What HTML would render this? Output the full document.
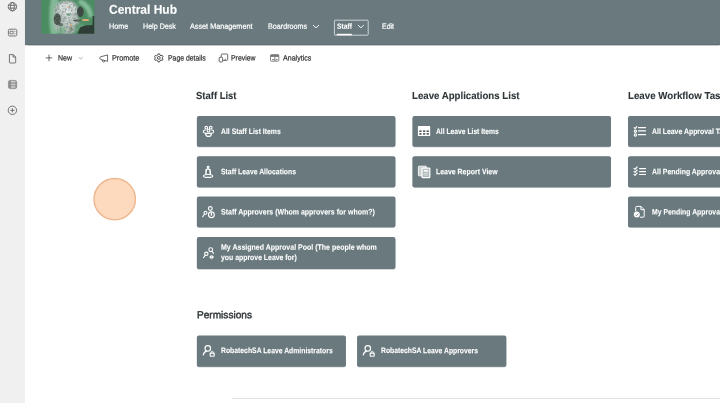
<!DOCTYPE html>
<html lang="en">
<head>
<meta charset="utf-8">
<title>Central Hub - Staff</title>
<style>
*{box-sizing:border-box;margin:0;padding:0}
html,body{width:720px;height:403px;overflow:hidden;background:#fff}
body{position:relative;font-family:"Liberation Sans",sans-serif;color:#323130}
.t{position:absolute;white-space:nowrap;line-height:1;transform-origin:0 0}
.a{position:absolute}
#side{position:absolute;left:0;top:0;width:25px;height:403px;background:#f0f0f0}
#hdr{position:absolute;left:25px;top:0;width:695px;height:45px;background:#69797e;border-bottom:1px solid #5f6e73;box-shadow:0 0.5px 1px rgba(0,0,0,.22)}
.btn{position:absolute;background:#69797e;border-radius:2px;box-shadow:0 0.3px 0.9px rgba(0,0,0,.3)}
svg{position:absolute;left:0;top:0;overflow:visible}
</style>
</head>
<body>
<div id="side"></div>
<div id="hdr"></div>
<svg width="720" height="403" viewBox="0 0 720 403" style="pointer-events:none">
<defs>
<filter id="bl1" x="-30%" y="-30%" width="160%" height="160%"><feGaussianBlur stdDeviation="1.3"/></filter>
<filter id="bl2" x="-30%" y="-30%" width="160%" height="160%"><feGaussianBlur stdDeviation="0.7"/></filter>
<filter id="nz" x="0" y="0" width="100%" height="100%">
<feTurbulence type="fractalNoise" baseFrequency="0.45" numOctaves="2" seed="7" result="n"/>
<feColorMatrix in="n" type="matrix" values="0 0 0 0 0.15  0 0 0 0 0.2  0 0 0 0 0.17  0 0 0 -3.2 1.9"/>
</filter>
<clipPath id="lc"><rect x="41.3" y="0" width="53.2" height="33.8"/></clipPath>
<clipPath id="lc2"><rect x="54" y="0" width="25" height="34" rx="11"/></clipPath>
</defs>
<g clip-path="url(#lc)">
<rect x="41" y="-1" width="54" height="35" fill="#4c8c63"/>
<g filter="url(#bl1)">
<path d="M51 -2 Q47.500 17 51 36 L58 36 L58 -2Z" fill="#82b895"/>
<path d="M80 -1 Q92 4 93 16 L89 18 Q87 7 78 3Z" fill="#86bd9b"/>
<rect x="54.300" y="0.500" width="24.200" height="34" rx="11" fill="#b4bfbc"/>
<ellipse cx="67" cy="9" rx="8.5" ry="7" fill="#dde3e2"/>
<ellipse cx="70" cy="21" rx="6" ry="5" fill="#c9d1cf"/>
<ellipse cx="62" cy="30" rx="4" ry="3.5" fill="#86bb98"/>
<ellipse cx="80" cy="27" rx="6" ry="3.5" fill="#5e9c76"/>
</g>
<g filter="url(#bl2)">
<ellipse cx="57.300" cy="19.300" rx="3.500" ry="6" fill="#454f49"/>
<ellipse cx="60.5" cy="24.5" rx="2.5" ry="1.6" fill="#5a645d"/>
<ellipse cx="80.300" cy="11.700" rx="3.400" ry="5.200" fill="#3d4943"/>
<ellipse cx="77" cy="20.5" rx="4" ry="1.1" fill="#4a554e"/>
<path d="M77.500 34 L80 27.500 L85 25.500 L92.400 25 L92.800 16 L94.500 16 L94.500 34 Z" fill="#2f3d36"/>
<ellipse cx="68.800" cy="14.800" rx="1.800" ry="0.900" fill="#5f9f78"/>
<ellipse cx="71" cy="29" rx="1.600" ry="2.400" fill="#8a8f78"/>
<ellipse cx="85.500" cy="20" rx="3.600" ry="1.100" fill="#e5a877"/>
<ellipse cx="71" cy="24.800" rx="1.100" ry="0.900" fill="#eaa872"/>
<ellipse cx="67.700" cy="7" rx="0.800" ry="0.900" fill="#efb386"/>
</g>
<rect x="52" y="0" width="30" height="34" filter="url(#nz)" clip-path="url(#lc2)" opacity="0.55"/>
</g>
</svg>

<svg width="720" height="403" viewBox="0 0 720 403" style="pointer-events:none"><rect x="334.4" y="20.2" width="33.8" height="15" rx="0.8" fill="none" stroke="#eef1f1" stroke-width="0.75"/><rect x="336.8" y="33.8" width="15" height="1.5" fill="#fff"/></svg>

<svg width="720" height="403" viewBox="0 0 720 403" style="pointer-events:none">
<rect x="196.9" y="116.5" width="198.5" height="30.8" rx="2" fill="#3f4b50" opacity="0.45"/>
<rect x="196.9" y="156.8" width="198.5" height="30.9" rx="2" fill="#3f4b50" opacity="0.45"/>
<rect x="196.9" y="197.1" width="198.5" height="30.7" rx="2" fill="#3f4b50" opacity="0.45"/>
<rect x="196.9" y="237.4" width="198.5" height="32.1" rx="2" fill="#3f4b50" opacity="0.45"/>
<rect x="412.5" y="116.5" width="198.5" height="30.8" rx="2" fill="#3f4b50" opacity="0.45"/>
<rect x="412.5" y="156.8" width="198.5" height="30.9" rx="2" fill="#3f4b50" opacity="0.45"/>
<rect x="628.0" y="116.5" width="198.5" height="30.8" rx="2" fill="#3f4b50" opacity="0.45"/>
<rect x="628.0" y="156.8" width="198.5" height="30.9" rx="2" fill="#3f4b50" opacity="0.45"/>
<rect x="628.0" y="197.1" width="198.5" height="30.7" rx="2" fill="#3f4b50" opacity="0.45"/>
<rect x="196.9" y="335.9" width="149.0" height="31.4" rx="2" fill="#3f4b50" opacity="0.45"/>
<rect x="357.1" y="335.9" width="149.2" height="31.4" rx="2" fill="#3f4b50" opacity="0.45"/>
<rect x="196.9" y="116.0" width="198.5" height="30.8" rx="2" fill="#69797e"/>
<rect x="196.9" y="156.3" width="198.5" height="30.9" rx="2" fill="#69797e"/>
<rect x="196.9" y="196.6" width="198.5" height="30.7" rx="2" fill="#69797e"/>
<rect x="196.9" y="236.9" width="198.5" height="32.1" rx="2" fill="#69797e"/>
<rect x="412.5" y="116.0" width="198.5" height="30.8" rx="2" fill="#69797e"/>
<rect x="412.5" y="156.3" width="198.5" height="30.9" rx="2" fill="#69797e"/>
<rect x="628.0" y="116.0" width="198.5" height="30.8" rx="2" fill="#69797e"/>
<rect x="628.0" y="156.3" width="198.5" height="30.9" rx="2" fill="#69797e"/>
<rect x="628.0" y="196.6" width="198.5" height="30.7" rx="2" fill="#69797e"/>
<rect x="196.9" y="335.4" width="149.0" height="31.4" rx="2" fill="#69797e"/>
<rect x="357.1" y="335.4" width="149.2" height="31.4" rx="2" fill="#69797e"/>
</svg>
<div id="txt" style="position:absolute;left:0;top:0;width:720px;height:403px;will-change:transform">
<div class="t" id="t_title" style="left:109.00px;top:3.00px;font-size:12.7px;font-weight:700;transform:translateY(0.80px) scaleX(0.9457) rotate(0.03deg);color:#fff;-webkit-text-stroke:0.1px #fff">Central Hub</div>
<div class="t" id="n_home" style="left:108.90px;top:22.00px;font-size:7.6px;font-weight:400;transform:translateY(0.70px) scaleX(0.9524) rotate(0.03deg);color:#fff;-webkit-text-stroke:0.22px #fff">Home</div>
<div class="t" id="n_help" style="left:142.90px;top:22.00px;font-size:7.6px;font-weight:400;transform:translateY(0.70px) scaleX(0.9392) rotate(0.03deg);color:#fff;-webkit-text-stroke:0.22px #fff">Help Desk</div>
<div class="t" id="n_asset" style="left:190.40px;top:22.00px;font-size:7.6px;font-weight:400;transform:translateY(0.70px) scaleX(0.9551) rotate(0.03deg);color:#fff;-webkit-text-stroke:0.22px #fff">Asset Management</div>
<div class="t" id="n_board" style="left:267.80px;top:22.00px;font-size:7.6px;font-weight:400;transform:translateY(0.70px) scaleX(0.9450) rotate(0.03deg);color:#fff;-webkit-text-stroke:0.22px #fff">Boardrooms</div>
<div class="t" id="n_staff" style="left:336.70px;top:22.00px;font-size:7.6px;font-weight:700;transform:translateY(0.70px) scaleX(0.8948) rotate(0.03deg);color:#fff;-webkit-text-stroke:0.1px #fff">Staff</div>
<div class="t" id="n_edit" style="left:381.60px;top:22.00px;font-size:7.6px;font-weight:400;transform:translateY(0.70px) scaleX(0.9165) rotate(0.03deg);color:#fff;-webkit-text-stroke:0.22px #fff">Edit</div>
<div class="t" id="c_new" style="left:57.90px;top:54.00px;font-size:7.7px;font-weight:400;transform:translateY(0.60px) scaleX(0.9096) rotate(0.03deg);color:#333;-webkit-text-stroke:0.22px #333">New</div>
<div class="t" id="c_promote" style="left:112.10px;top:54.00px;font-size:7.7px;font-weight:400;transform:translateY(0.60px) scaleX(0.9394) rotate(0.03deg);color:#333;-webkit-text-stroke:0.22px #333">Promote</div>
<div class="t" id="c_details" style="left:167.80px;top:54.00px;font-size:7.7px;font-weight:400;transform:translateY(0.60px) scaleX(0.8934) rotate(0.03deg);color:#333;-webkit-text-stroke:0.22px #333">Page details</div>
<div class="t" id="c_preview" style="left:231.10px;top:54.00px;font-size:7.7px;font-weight:400;transform:translateY(0.60px) scaleX(0.8960) rotate(0.03deg);color:#333;-webkit-text-stroke:0.22px #333">Preview</div>
<div class="t" id="c_analytics" style="left:283.30px;top:54.00px;font-size:7.7px;font-weight:400;transform:translateY(0.60px) scaleX(0.9199) rotate(0.03deg);color:#333;-webkit-text-stroke:0.22px #333">Analytics</div>
<div class="t" id="h_staff" style="left:196.20px;top:90.00px;font-size:10.2px;font-weight:700;transform:translateY(0.90px) scaleX(0.9290) rotate(0.03deg);color:#2f3538;-webkit-text-stroke:0.1px #2f3538">Staff List</div>
<div class="t" id="h_leave" style="left:411.80px;top:90.00px;font-size:10.2px;font-weight:700;transform:translateY(0.90px) scaleX(0.9478) rotate(0.03deg);color:#2f3538;-webkit-text-stroke:0.1px #2f3538">Leave Applications List</div>
<div class="t" id="h_work" style="left:627.50px;top:90.00px;font-size:10.2px;font-weight:700;transform:translateY(0.90px) scaleX(0.9536) rotate(0.03deg);color:#2f3538;-webkit-text-stroke:0.1px #2f3538">Leave Workflow Tasks</div>
<div class="t" id="h_perm" style="left:196.70px;top:310.00px;font-size:10.2px;font-weight:400;transform:translateY(0.20px) scaleX(0.9913) rotate(0.03deg);color:#2f3538;-webkit-text-stroke:0.42px #2f3538">Permissions</div>
<div class="t" id="b1" style="left:220.50px;top:128.00px;font-size:8.0px;font-weight:700;transform:translateY(0.00px) scaleX(0.8553) rotate(0.03deg);color:#fff;-webkit-text-stroke:0.1px #fff">All Staff List Items</div>
<div class="t" id="b2" style="left:220.50px;top:168.00px;font-size:8.0px;font-weight:700;transform:translateY(0.30px) scaleX(0.8549) rotate(0.03deg);color:#fff;-webkit-text-stroke:0.1px #fff">Staff Leave Allocations</div>
<div class="t" id="b3" style="left:220.60px;top:208.00px;font-size:8.0px;font-weight:700;transform:translateY(0.40px) scaleX(0.8753) rotate(0.03deg);color:#fff;-webkit-text-stroke:0.1px #fff">Staff Approvers (Whom approvers for whom?)</div>
<div class="t" id="b4a" style="left:220.60px;top:243.00px;font-size:8.0px;font-weight:700;transform:translateY(0.70px) scaleX(0.8770) rotate(0.03deg);color:#fff;-webkit-text-stroke:0.1px #fff">My Assigned Approval Pool (The people whom</div>
<div class="t" id="b4b" style="left:220.60px;top:253.00px;font-size:8.0px;font-weight:700;transform:translateY(0.90px) scaleX(0.8611) rotate(0.03deg);color:#fff;-webkit-text-stroke:0.1px #fff">you approve Leave for)</div>
<div class="t" id="b5" style="left:436.20px;top:128.00px;font-size:8.0px;font-weight:700;transform:translateY(0.00px) scaleX(0.8407) rotate(0.03deg);color:#fff;-webkit-text-stroke:0.1px #fff">All Leave List Items</div>
<div class="t" id="b6" style="left:436.20px;top:168.00px;font-size:8.0px;font-weight:700;transform:translateY(0.30px) scaleX(0.8676) rotate(0.03deg);color:#fff;-webkit-text-stroke:0.1px #fff">Leave Report View</div>
<div class="t" id="b7" style="left:651.80px;top:128.00px;font-size:8.0px;font-weight:700;transform:translateY(0.00px) scaleX(0.8620) rotate(0.03deg);color:#fff;-webkit-text-stroke:0.1px #fff">All Leave Approval Tasks</div>
<div class="t" id="b8" style="left:652.00px;top:168.00px;font-size:8.0px;font-weight:700;transform:translateY(0.30px) scaleX(0.8676) rotate(0.03deg);color:#fff;-webkit-text-stroke:0.1px #fff">All Pending Approval Tasks</div>
<div class="t" id="b9" style="left:652.00px;top:208.00px;font-size:8.0px;font-weight:700;transform:translateY(0.40px) scaleX(0.8579) rotate(0.03deg);color:#fff;-webkit-text-stroke:0.1px #fff">My Pending Approval Tasks</div>
<div class="t" id="b10" style="left:220.70px;top:347.00px;font-size:8.0px;font-weight:700;transform:translateY(0.10px) scaleX(0.8527) rotate(0.03deg);color:#fff;-webkit-text-stroke:0.1px #fff">RobatechSA Leave Administrators</div>
<div class="t" id="b11" style="left:380.70px;top:347.00px;font-size:8.0px;font-weight:700;transform:translateY(0.10px) scaleX(0.8501) rotate(0.03deg);color:#fff;-webkit-text-stroke:0.1px #fff">RobatechSA Leave Approvers</div>
</div>
<div class="a" style="left:232px;top:398px;width:488px;height:1px;background:#dde3e5"></div>
<svg width="720" height="403" viewBox="0 0 720 403" style="pointer-events:none"><circle cx="114.7" cy="199.2" r="20.7" fill="#fddabe" stroke="#edb68d" stroke-width="1.4"/></svg>
<svg width="720" height="403" viewBox="0 0 720 403" fill="none" style="pointer-events:none">
<!-- sidebar icons -->
<g stroke="#555" stroke-width="0.8" fill="none">
<circle cx="12.4" cy="6.7" r="4.2"/>
<ellipse cx="12.4" cy="6.7" rx="1.9" ry="4.2"/>
<path d="M8.4 5.3h8M8.4 8.1h8"/>
<rect x="8.4" y="29.2" width="8.4" height="6.8" rx="1.4"/>
<path d="M10 31.3h3.2v2.6H10zM14.4 31.4h1M14.4 33.8h1" stroke-width="0.7"/>
<path d="M9.4 54.6h3.9l2.4 2.4v5.2a.8.8 0 0 1-.8.8H10.2a.8.8 0 0 1-.8-.8z M13.2 54.7v2.4h2.4"/>
<circle cx="12.4" cy="110.3" r="4.2"/>
<path d="M10.3 110.3h4.2M12.4 108.2v4.2"/>
</g>
<g>
<rect x="8.400" y="80.400" width="8.300" height="8.200" rx="1.700" fill="#8e8e8e" stroke="#777" stroke-width="0.500"/>
<path d="M11 81.800h4.400M11 84.500h4.400M11 87.100h4.400" stroke="#cfcfcf" stroke-width="1.500"/>
</g>
<!-- nav chevrons -->
<g stroke="#fff" stroke-width="0.8" fill="none" stroke-linecap="round" stroke-linejoin="round">
<path d="M313.300 25.300l2.700 2.500 2.700-2.500" stroke-width="0.900"/>
<path d="M358.200 25.300l2.700 2.500 2.700-2.500" stroke-width="0.900"/>
</g>
<!-- command bar icons -->
<g stroke="#444" stroke-width="0.8" fill="none" stroke-linejoin="round">
<path d="M45.7 57.9h6.6M49 54.6v6.6"/>
<path d="M78.9 57.3l1.8 1.8 1.8-1.8" stroke="#8a8a8a" stroke-width="0.7"/>
<path d="M107.6 54.9l-6.9 1.9a1.35 1.35 0 0 0 0 2.6l6.9 2z"/>
<path d="M102.3 59.9v.6a1.3 1.3 0 0 0 2.6.3"/>
<circle cx="158.8" cy="57.9" r="1.4" stroke-width="0.95"/>
<path stroke-width="0.95" d="M158 53.9h1.6l.4 1.3 1 .55 1.3-.35.8 1.4-.9 1 0 .2.9 1-.8 1.4-1.3-.35-1 .55-.4 1.3H158l-.4-1.3-1-.55-1.3.35-.8-1.4.9-1 0-.2-.9-1 .8-1.4 1.3.35 1-.55z"/>
<path d="M221.2 57v-2a1 1 0 0 1 1-1h4.500a1 1 0 0 1 1 1v4.400a1 1 0 0 1-1 1H223"/>
<rect x="219.200" y="57.300" width="3.400" height="4.700" rx="0.800"/>
<path d="M224.400 60.200l1.300-1.100" stroke-width="1"/>
</g>
<g>
<rect x="270.500" y="54.700" width="8.300" height="6.500" rx="0.800" stroke="#666" stroke-width="0.800"/>
<rect x="270.500" y="54.700" width="8.300" height="2.200" fill="#777"/>
<path d="M272 59.600h2.200M275.400 59.600h2.200M274.800 57v4" stroke="#666" stroke-width="0.800"/>
</g>
<!-- button icons -->
<g stroke="#fff" stroke-width="1" fill="none" stroke-linecap="round" stroke-linejoin="round">
<!-- icon1 people community -->
<g stroke-width="1.05">
<circle cx="206.300" cy="127.700" r="1.350"/>
<circle cx="210.700" cy="127.700" r="1.350"/>
<circle cx="208.500" cy="130.700" r="1.350"/>
<path d="M205.300 129.900q-2.400 .3-1.900 2.200 .5 1.300 2.200 1.100"/>
<path d="M211.700 129.900q2.400 .3 1.900 2.200-.5 1.300-2.200 1.100"/>
<path d="M205.700 133.400h5.600v.5a2.800 2.500 0 0 1-5.600 0z" stroke-width="1.2"/>
</g>
<!-- icon2 person on podium -->
<circle cx="208.100" cy="167.100" r="0.900" stroke-width="1.1"/>
<path d="M206 174.300v-3.300a2.100 2.100 0 0 1 4.200 0v3.300" stroke-width="1.500"/>
<ellipse cx="208.100" cy="175.900" rx="4.600" ry="1.450" stroke-width="1.150"/>
<!-- icon3 -->
<circle cx="210.300" cy="208.500" r="1.900" stroke-width="1.100"/>
<circle cx="205.500" cy="212.700" r="1.500" stroke-width="1.100"/>
<path d="M204.400 214.300l-1.700 2.500" stroke-width="1.100"/>
<circle cx="211.400" cy="214.700" r="2.900" stroke-width="1.150"/>
<path d="M211.400 212.800v2.400" stroke-width="1.300"/>
<!-- icon4 -->
<circle cx="210.700" cy="249.700" r="1.900" stroke-width="1.100"/>
<circle cx="206.300" cy="253.800" r="1.700" stroke-width="1.100"/>
<path d="M205.200 255.400l-1.600 2.200M212.100 251.400l1.400 2.100" stroke-width="1.100"/>
<path d="M211.100 255.600l-1.700 1.500 1.700 1.500zM212.100 255.600l1.700 1.500-1.700 1.500z" fill="#fff" stroke-width="0.500"/>
<!-- icon10/11 person lock -->
<circle cx="207.8" cy="348.400" r="2.750" stroke-width="1.150"/>
<path d="M203.3 354.900q.500-3 3.300-3.800" stroke-width="1.200"/>
<rect x="210.2" y="353.100" width="4" height="3.100" rx="0.500" stroke-width="1.150"/>
<path d="M211.1 353v-.600a1.100 1.100 0 0 1 2.200 0v.600" stroke-width="0.900"/>
<circle cx="367.8" cy="348.400" r="2.750" stroke-width="1.150"/>
<path d="M363.3 354.900q.500-3 3.300-3.800" stroke-width="1.200"/>
<rect x="370.2" y="353.100" width="4" height="3.100" rx="0.500" stroke-width="1.150"/>
<path d="M371.1 353v-.600a1.100 1.100 0 0 1 2.200 0v.600" stroke-width="0.900"/>
<!-- icon7 -->
<path d="M634.200 127.700l.900.900 1.700-2" stroke-width="1.150"/>
<circle cx="635.400" cy="131.200" r="1.150" stroke-width="1.150"/>
<circle cx="635.400" cy="134.900" r="1.150" stroke-width="1.150"/>
<path d="M638.500 127.600h7M638.500 130.900h7M638.500 134.700h7" stroke-width="1.200"/>
<!-- icon8 -->
<path d="M634 168.400l1 .900 2.100-2.300M634 171.400l1 .900 2.100-2.300M634 174.400l1 .900 2.100-2.300" stroke-width="1.150"/>
<path d="M639.600 168.600h5.900M639.600 171.600h5.900M639.600 174.500h5.900" stroke-width="1.200"/>
<!-- icon9 -->
<path d="M635.700 211v-3.600a1 1 0 0 1 1-1h4.300l3.200 3.200v6.600a1 1 0 0 1-1 1h-3"/>
<path d="M640.900 206.600v3.100h3.100"/>
</g>
<circle cx="636.800" cy="214.600" r="3" fill="#fff"/>
<path d="M635.400 214.700l1 1 1.900-2.100" stroke="#69797e" stroke-width="0.800" fill="none"/>
<!-- icon5 table -->
<rect x="417.900" y="126.100" width="12.300" height="10" rx="0.600" fill="#fff"/>
<g fill="#4d5a5e">
<rect x="419.300" y="130.400" width="2.300" height="1.600"/><rect x="423" y="130.400" width="2.300" height="1.600"/><rect x="426.600" y="130.400" width="2.300" height="1.600"/>
<rect x="419.300" y="133.100" width="2.300" height="1.600"/><rect x="423" y="133.100" width="2.300" height="1.600"/><rect x="426.600" y="133.100" width="2.300" height="1.600"/>
</g>
<!-- icon6 report docs -->
<rect x="418.400" y="166.200" width="8" height="9.600" rx="0.500" fill="#c9d0d2" stroke="#f1f3f3" stroke-width="1"/>
<rect x="422" y="168.100" width="7.800" height="9.500" rx="0.500" fill="#aeb7ba" stroke="#fff" stroke-width="1.250"/>
<rect x="423.700" y="169.900" width="4.400" height="1.700" fill="#fff"/>
<path d="M423.700 173.200h4.400M423.700 175h4.400" stroke="#eef0f1" stroke-width="0.700"/>
</svg>

</body>
</html>
